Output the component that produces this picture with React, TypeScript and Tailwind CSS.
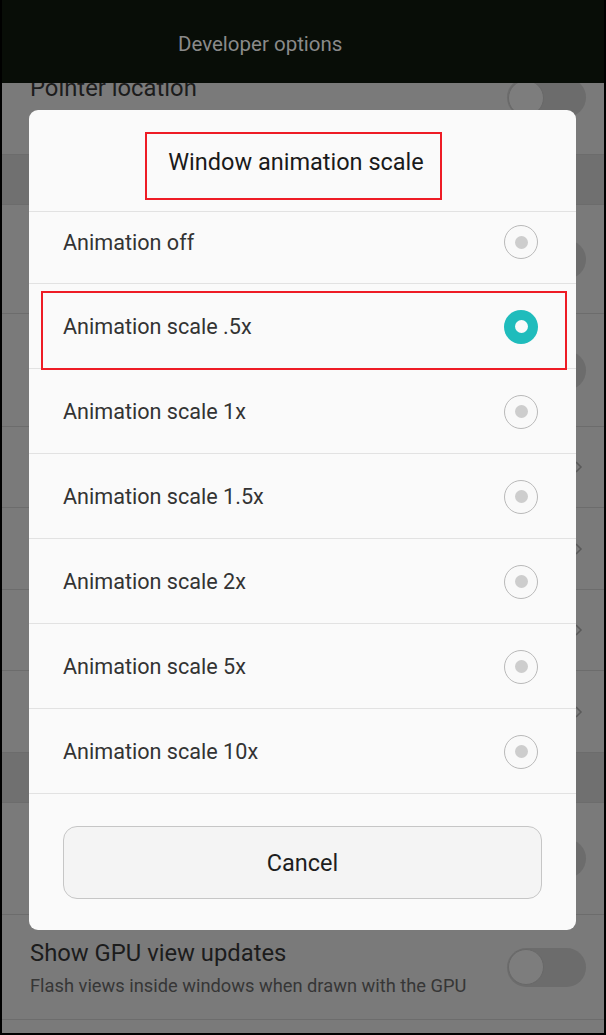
import React from "react";

const options = [
  "Animation off",
  "Animation scale .5x",
  "Animation scale 1x",
  "Animation scale 1.5x",
  "Animation scale 2x",
  "Animation scale 5x",
  "Animation scale 10x",
];

function BgSwitch() {
  return (
    <div className="w-[79px] h-[39px] rounded-full bg-[#6c6c6c] flex items-center">
      <div className="w-[36px] h-[36px] rounded-full bg-[#7d7d7d] border border-[#686868] ml-[1px]" />
    </div>
  );
}

function Chevron() {
  return (
    <svg width="10" height="14" viewBox="0 0 10 14" className="mr-[20px]">
      <path d="M2 2 L7 7 L2 12" fill="none" stroke="#5a5a5a" strokeWidth="1.5" />
    </svg>
  );
}

function Radio({ checked }: { checked: boolean }) {
  if (checked) {
    return (
      <div className="w-[34px] h-[34px] rounded-full bg-[#1fbcbc] flex items-center justify-center">
        <div className="w-[13px] h-[13px] rounded-full bg-[#fafafa]" />
      </div>
    );
  }
  return (
    <div className="w-[34px] h-[34px] rounded-full border border-[#b9b9b9] bg-[#f9f9f9] flex items-center justify-center">
      <div className="w-[13px] h-[13px] rounded-full bg-[#cdcdcd]" />
    </div>
  );
}

export default function App() {
  return (
    <div
      className="relative w-[606px] h-[1035px] overflow-hidden bg-[#7a7a7a] border-l-2 border-r-2 border-b-2 border-black"
      style={{ fontFamily: "Roboto, 'Noto Sans', sans-serif" }}
    >
      {/* top bar */}
      <div className="relative z-10 h-[83px] bg-[#080d07] flex items-center pl-[176px]">
        <span className="text-[20.5px] text-[#8a8a8a] mt-[6px]">Developer options</span>
      </div>

      {/* background list */}
      <div className="flex flex-col">
        <div className="h-[71px] flex items-start justify-between pl-[28px] pr-[18px]">
          <span className="text-[23.8px] leading-[28px] text-[#1c1c1c] mt-[-9px]">Pointer location</span>
          <div className="mt-[-5px]">
            <BgSwitch />
          </div>
        </div>
        <div className="h-[50px] bg-[#707070] border-t border-[#6c6c6c]" />
        <div className="h-[109px] flex items-center justify-end pr-[18px] border-t border-[#6c6c6c]">
          <BgSwitch />
        </div>
        <div className="h-[113px] flex items-center justify-end pr-[18px] border-t border-[#6c6c6c]">
          <BgSwitch />
        </div>
        <div className="h-[81px] flex items-center justify-end border-t border-[#6c6c6c]">
          <Chevron />
        </div>
        <div className="h-[82px] flex items-center justify-end border-t border-[#6c6c6c]">
          <Chevron />
        </div>
        <div className="h-[81px] flex items-center justify-end border-t border-[#6c6c6c]">
          <Chevron />
        </div>
        <div className="h-[82px] flex items-center justify-end border-t border-[#6c6c6c]">
          <Chevron />
        </div>
        <div className="h-[50px] bg-[#707070] border-t border-[#6c6c6c]" />
        <div className="h-[112px] flex items-center justify-end pr-[18px] border-t border-[#6c6c6c]">
          <BgSwitch />
        </div>
        <div className="h-[106px] flex items-center justify-between pl-[28px] pr-[18px] border-t border-[#6c6c6c] border-b">
          <div className="flex flex-col mt-[2px]">
            <span className="text-[23.8px] leading-[28px] text-[#1c1c1c]">Show GPU view updates</span>
            <span className="text-[18.3px] leading-[24px] mt-[7px] text-[#363636]">
              Flash views inside windows when drawn with the GPU
            </span>
          </div>
          <BgSwitch />
        </div>
      </div>

      {/* dialog */}
      <div className="absolute z-20 left-[27px] top-[110px] w-[547px] h-[820px] rounded-[9px] bg-[#fafafa] flex flex-col">
        <div className="relative h-[102px] flex items-center justify-center border-b border-[#e2e2e2]">
          <span className="text-[23.5px] text-[#1a1a1a] mt-[4px] mr-[13px]">Window animation scale</span>
          <div className="absolute left-[116px] top-[22px] w-[297px] h-[68px] border-[2.5px] border-[#ee1c25]" />
        </div>
        {options.map((o, i) => (
          <div
            key={o}
            className={
              "relative flex items-center justify-between pl-[34px] pr-[38px] border-b border-[#e2e2e2] " +
              (i === 0 ? "h-[72px] pb-[12px]" : "h-[85px]")
            }
          >
            <span className="text-[21.6px] text-[#333333] mt-[3px]">{o}</span>
            <div className="mt-[1px]">
              <Radio checked={i === 1} />
            </div>
            {i === 1 && (
              <div className="absolute left-[12px] top-[7px] w-[526px] h-[79px] border-[2.5px] border-[#ee1c25]" />
            )}
          </div>
        ))}
        <div className="flex-1 px-[34px] pt-[32px]">
          <div className="h-[73px] rounded-[14px] border border-[#c6c6c6] bg-[#f4f4f4] flex items-center justify-center">
            <span className="text-[23.5px] text-[#1e1e1e] mt-[3px]">Cancel</span>
          </div>
        </div>
      </div>
    </div>
  );
}
